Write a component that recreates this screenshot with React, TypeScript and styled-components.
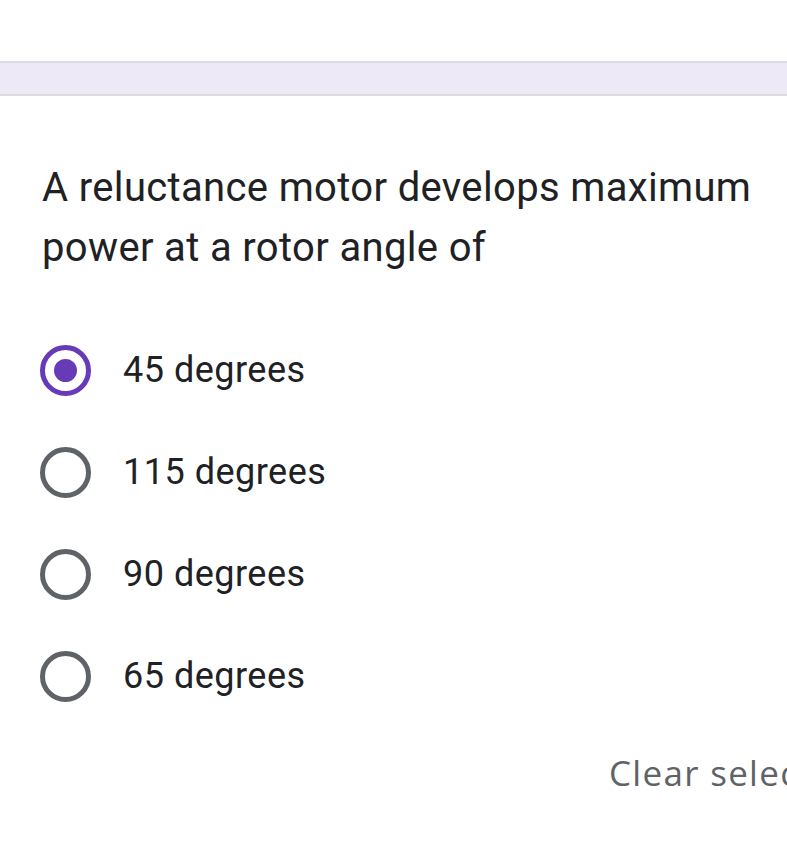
import styled, { createGlobalStyle } from "styled-components";
import { useState } from "react";

const GlobalStyle = createGlobalStyle`
  html, body {
    margin: 0;
    padding: 0;
    background: #ffffff;
  }
  body {
    font-family: Roboto, "Liberation Sans", sans-serif;
    color: #202124;
  }
`;

const Page = styled.div`
  width: 787px;
  height: 866px;
  overflow: hidden;
  padding-top: 61px;
  box-sizing: border-box;
`;

const Band = styled.div`
  height: 31px;
  background: #ede9f7;
  border-top: 2px solid #dadce0;
  border-bottom: 2px solid #dadce0;
`;

const Question = styled.h1`
  margin: 62px 0 41px;
  padding: 0 30px 0 42px;
  font-size: 40px;
  font-weight: 400;
  line-height: 60px;
  letter-spacing: 0.35px;
  color: #202124;
`;

const Options = styled.div`
  display: flex;
  flex-direction: column;
`;

const OptionRow = styled.label`
  display: flex;
  align-items: center;
  gap: 32px;
  height: 102px;
  padding-left: 40px;
  cursor: pointer;
`;

const Radio = styled.span<{ $checked: boolean }>`
  display: flex;
  align-items: center;
  justify-content: center;
  width: 41px;
  height: 41px;
  border-radius: 50%;
  border: 5px solid ${(p) => (p.$checked ? "#673ab7" : "#5f6368")};
  flex-shrink: 0;
`;

const Dot = styled.span`
  width: 23px;
  height: 23px;
  border-radius: 50%;
  background: #673ab7;
`;

const OptionText = styled.span`
  font-size: 36px;
  line-height: 1;
  letter-spacing: 0.5px;
  color: #202124;
`;

const Footer = styled.div`
  display: flex;
  padding: 22px 0 0 609px;
  white-space: nowrap;
`;

const ClearButton = styled.button`
  border: none;
  background: none;
  padding: 0;
  font-family: "Open Sans", Roboto, sans-serif;
  font-size: 35px;
  font-weight: 500;
  letter-spacing: 1.3px;
  color: #5f6368;
  cursor: pointer;
`;

const choices = ["45 degrees", "115 degrees", "90 degrees", "65 degrees"];

export default function App() {
  const [selected, setSelected] = useState<number | null>(0);

  return (
    <>
      <GlobalStyle />
      <Page>
        <Band />
        <Question>
          A reluctance motor develops maximum power at a rotor angle of
        </Question>
        <Options>
          {choices.map((c, i) => (
            <OptionRow key={c} onClick={() => setSelected(i)}>
              <Radio $checked={selected === i}>{selected === i && <Dot />}</Radio>
              <OptionText>{c}</OptionText>
            </OptionRow>
          ))}
        </Options>
        <Footer>
          <ClearButton onClick={() => setSelected(null)}>Clear selection</ClearButton>
        </Footer>
      </Page>
    </>
  );
}
